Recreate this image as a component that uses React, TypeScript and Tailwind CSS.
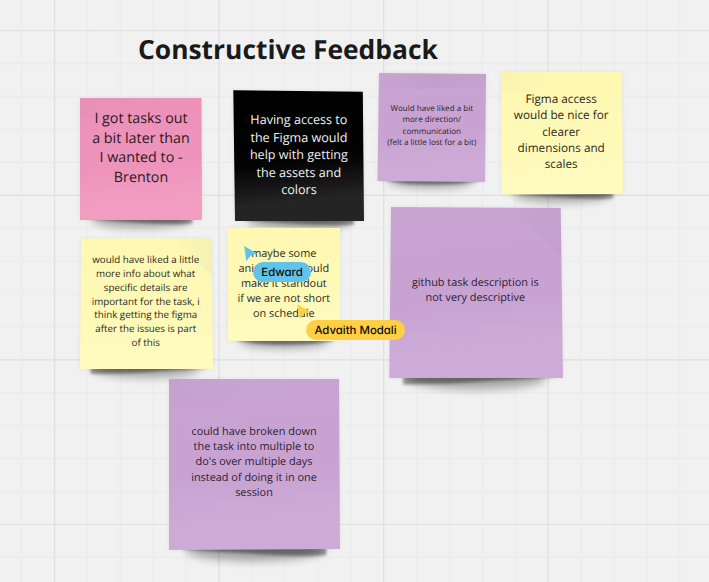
import type { CSSProperties } from "react";

type Pt = [number, number];

interface Note {
  id: string;
  corners: [Pt, Pt, Pt, Pt];
  top: string;
  mid: string;
  bottom: string;
  color: string;
  font: number;
  pitch: number;
  baseline: number;
  center: number;
  shadow: "left" | "right" | "even";
  fold?: "left" | "wide" | "right";
  lines: string[];
}

const purple = { top: "#c8a4d2", mid: "#c8a3d2", bottom: "#ceabd7", color: "#2a2130" };
const yellow = { top: "#fef8b2", mid: "#fff9b7", bottom: "#fffbbe", color: "#2b2a20" };

const notes: Note[] = [
  {
    id: "brenton", corners: [[80, 98], [201.5, 98], [202, 220], [80, 220]],
    top: "#ec92ba", mid: "#ee93bb", bottom: "#f19dc0", color: "#2b1a22",
    font: 14.3, pitch: 19.6, baseline: 124.5, center: 141, shadow: "right", fold: "left",
    lines: ["I got tasks out", "a bit later than", "I wanted to -", "Brenton"],
  },
  {
    id: "figma", corners: [[233.3, 90.2], [362.8, 91.8], [364, 221], [235, 221]],
    top: "#000000", mid: "#030303", bottom: "#242424", color: "#f2f2f2",
    font: 12.6, pitch: 17.5, baseline: 124.8, center: 298.9, shadow: "right",
    lines: ["Having access to", "the Figma would", "help with getting", "the assets and", "colors"],
  },
  {
    id: "direction", corners: [[379, 73], [486, 74], [485, 182], [377.5, 181]],
    ...purple, font: 8.05, pitch: 11.3, baseline: 111.8, center: 431.8, shadow: "even", fold: "wide",
    lines: ["Would have liked a bit", "more direction/", "communication", "(felt a little lost for a bit)"],
  },
  {
    id: "access", corners: [[501.2, 72], [621.8, 72], [623, 194], [501.2, 194.6]],
    ...yellow, font: 11.75, pitch: 16.2, baseline: 103.8, center: 561.2, shadow: "right", fold: "left",
    lines: ["Figma access", "would be nice for", "clearer", "dimensions and", "scales"],
  },
  {
    id: "details", corners: [[81.3, 238.5], [211.3, 238.5], [213, 369], [80, 369]],
    ...yellow, font: 9.8, pitch: 13.85, baseline: 263.8, center: 145.7, shadow: "left", fold: "right",
    lines: ["would have liked a little", "more info about what", "specific details are", "important for the task, i", "think getting the figma", "after the issues is part", "of this"],
  },
  {
    id: "standout", corners: [[227.3, 227.5], [340, 228], [340, 341], [228, 341]],
    ...yellow, font: 10.9, pitch: 14.95, baseline: 258.5, center: 283.8, shadow: "even",
    lines: ["maybe some", "animations would", "make it standout", "if we are not short", "on schedule"],
  },
  {
    id: "github", corners: [[391, 207], [560.7, 208], [563, 378], [389.3, 378]],
    ...purple, font: 10.9, pitch: 15.1, baseline: 286.3, center: 475.3, shadow: "left", fold: "right",
    lines: ["github task description is", "not very descriptive"],
  },
  {
    id: "session", corners: [[169, 379], [339, 379], [340, 549], [169, 550]],
    ...purple, font: 10.9, pitch: 15.3, baseline: 435.5, center: 254, shadow: "right", fold: "left",
    lines: ["could have broken down", "the task into multiple to", "do's over multiple days", "instead of doing it in one", "session"],
  },
];

const majorX = [54.5, 219, 383.6, 548.2];
const majorY = [30.6, 195.3, 359.9, 524.5];
const steps = Array.from({ length: 24 }, (_, i) => i - 2);

function Grid() {
  return (
    <svg className="absolute inset-0 h-[582px] w-[709px]" viewBox="0 0 709 582">
      {steps.map((i) => (
        <g key={i} stroke="#ececec" strokeWidth="1.4">
          <path d={`M${54.5 + i * 32.92} 0V582`} />
          <path d={`M0 ${30.6 + i * 32.92}H709`} />
        </g>
      ))}
      {majorX.map((x) => <path key={x} d={`M${x} 0V582`} stroke="#e1e1e1" strokeWidth="1.2" />)}
      {majorY.map((y) => <path key={y} d={`M0 ${y}H709`} stroke="#e1e1e1" strokeWidth="1.2" />)}
    </svg>
  );
}

function Paper({ note }: { note: Note }) {
  const [tl, tr, br, bl] = note.corners;
  const w = br[0] - bl[0];
  const h = bl[1] - tl[1];
  const poly = note.corners.map((p) => p.join(",")).join(" ");
  const y = bl[1];
  const u = (f: number) => bl[0] + w * f;
  const s = w / 122;
  const core =
    note.shadow === "left"
      ? `M${u(0.08)} ${y - 8}V${y + 4.5 * s}Q${u(0.35)} ${y + 4.5 * s} ${u(0.6)} ${y + 2 * s}L${u(0.95)} ${y - 1}V${y - 8}Z`
      : note.shadow === "right"
        ? `M${u(0.08)} ${y - 8}V${y - 1}Q${u(0.35)} ${y + 2 * s} ${u(0.6)} ${y + 3.5 * s}T${u(0.92)} ${y + 3.5 * s}V${y - 8}Z`
        : `M${u(0.07)} ${y - 8}V${y - 1}Q${u(0.22)} ${y + 4 * s} ${u(0.5)} ${y + 4 * s}T${u(0.94)} ${y}V${y - 8}Z`;
  return (
    <g>
      <defs>
        <linearGradient id={`g-${note.id}`} x1="0.4" y1="0" x2="0.5" y2="1">
          <stop offset="0" stopColor={note.top} />
          <stop offset="0.55" stopColor={note.mid} />
          <stop offset="0.85" stopColor={note.bottom} />
        </linearGradient>
      </defs>
      <polygon points={poly} fill="#000" opacity="0.07" filter="url(#soft)" />
      <ellipse cx={u(0.5)} cy={y} rx={w * 0.4} ry={8 * s} fill="#000" opacity="0.3" filter="url(#halo)" />
      <path d={core} fill="#000" opacity="0.38" filter="url(#cast)" />
      <polygon points={poly} fill={`url(#g-${note.id})`} />
      {note.fold === "left" && (
        <path d={`M${tl[0]} ${tl[1]}H${u(0.48)}L${u(0.4)} ${tl[1] + h * 0.16}H${tl[0]}Z`} fill="url(#crease)" />
      )}
      {note.fold === "wide" && (
        <path d={`M${tl[0]} ${tl[1]}L${tr[0]} ${tr[1]}V${tr[1] + h * 0.12}L${tl[0]} ${tl[1] + h * 0.16}Z`} fill="url(#wide)" />
      )}
      {note.fold === "right" && (
        <path d={`M${u(0.68)} ${tr[1]}L${tr[0]} ${tr[1]}L${tr[0] + 0.6} ${tr[1] + h * 0.28}Z`} fill="url(#corner)" />
      )}
    </g>
  );
}

function NoteText({ note }: { note: Note }) {
  const style: CSSProperties = {
    left: note.center - 90,
    top: note.baseline - note.pitch / 2 - note.font * 0.388,
    fontSize: note.font,
    lineHeight: `${note.pitch}px`,
    color: note.color,
  };
  return (
    <p className="absolute w-[180px] text-center whitespace-nowrap [text-rendering:geometricPrecision]" style={style}>
      {note.lines.map((l) => <span key={l} className="block">{l}</span>)}
    </p>
  );
}

export default function App() {
  return (
    <main className="relative h-[582px] w-[709px] overflow-hidden bg-[#f1f1f1] font-['Open_Sans',sans-serif]">
      <Grid />
      <h1 className="absolute top-[31px] left-[138px] text-[26.4px] leading-[36px] font-bold whitespace-nowrap text-[#1a1a1a] [text-rendering:geometricPrecision]">
        Constructive Feedback
      </h1>
      <svg className="absolute inset-0 h-[582px] w-[709px]" viewBox="0 0 709 582">
        <defs>
          <filter id="soft" x="-10%" y="-10%" width="120%" height="125%"><feGaussianBlur stdDeviation="2" /></filter>
          <filter id="halo" x="-20%" y="-100%" width="140%" height="300%"><feGaussianBlur stdDeviation="4.5" /></filter>
          <filter id="cast" x="-10%" y="-60%" width="120%" height="240%"><feGaussianBlur stdDeviation="1.6" /></filter>
          <linearGradient id="crease">
            <stop offset="0" stopColor="#403050" stopOpacity="0.025" />
            <stop offset="1" stopColor="#403050" stopOpacity="0" />
          </linearGradient>
          <linearGradient id="wide">
            <stop offset="0" stopColor="#403050" stopOpacity="0" />
            <stop offset="0.5" stopColor="#403050" stopOpacity="0.05" />
            <stop offset="1" stopColor="#403050" stopOpacity="0.02" />
          </linearGradient>
          <linearGradient id="corner">
            <stop offset="0" stopColor="#403050" stopOpacity="0" />
            <stop offset="1" stopColor="#403050" stopOpacity="0.04" />
          </linearGradient>
        </defs>
        {notes.map((n) => <Paper key={n.id} note={n} />)}
      </svg>
      {notes.map((n) => <NoteText key={n.id} note={n} />)}
      <svg className="absolute inset-0 h-[582px] w-[709px]" viewBox="0 0 709 582">
        <path d="M244.2 246L257.3 253.7L250.8 255.5L246.3 261Z" fill="#61c3ea" />
        <path d="M297.3 304.3L310.6 312L304 313.6L299.5 319Z" fill="#ffd044" />
      </svg>
      <div className="absolute top-[262px] left-[253px] flex h-5 w-[58px] items-center justify-center rounded-full bg-[#61c3ea] font-['Inter',sans-serif] text-[11.4px] leading-[18px] font-medium text-[#0c0c0c] [font-feature-settings:'cv11'] [text-rendering:geometricPrecision]">
        Edward
      </div>
      <div className="absolute top-[320px] left-[306px] flex h-5 w-[99px] items-center justify-center rounded-full bg-[#ffd044] font-['Inter',sans-serif] text-[11.4px] leading-[18px] font-medium whitespace-nowrap text-[#0c0c0c] [font-feature-settings:'cv11'] [text-rendering:geometricPrecision]">
        Advaith Modali
      </div>
    </main>
  );
}
